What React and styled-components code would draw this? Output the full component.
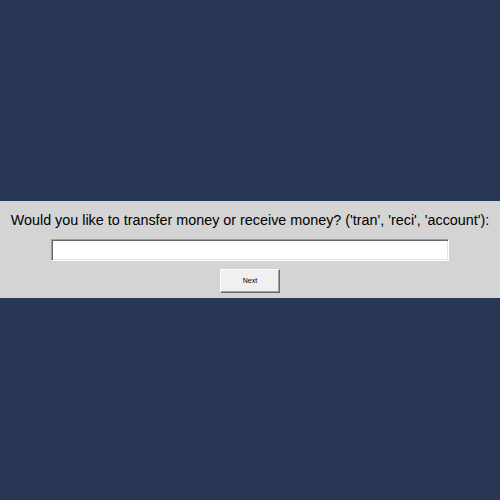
import React from "react";
import styled, { createGlobalStyle } from "styled-components";

const Global = createGlobalStyle`
  html, body { margin: 0; padding: 0; }
  body { background: #283756; font-family: "Liberation Sans", Arial, sans-serif; }
`;

const Screen = styled.div`
  width: 500px;
  height: 500px;
  display: flex;
  flex-direction: column;
  justify-content: center;
  background: #283756;
`;

const Panel = styled.div`
  background: #d4d4d4;
  display: flex;
  flex-direction: column;
  align-items: center;
  padding: 9px 0 5px;
  margin-bottom: 2px;
`;

const Prompt = styled.div`
  font-size: 14.35px;
  color: #000;
  line-height: 20px;
  white-space: nowrap;
`;

const Input = styled.input`
  box-sizing: border-box;
  width: 398px;
  height: 22px;
  margin-top: 9px;
  background: #fff;
  border-style: solid;
  border-width: 1px;
  border-color: #a0a0a0 #ffffff #ffffff #a0a0a0;
  box-shadow: inset 1px 1px 0 #696969, inset -1px -1px 0 #e3e3e3;
  outline: none;
  padding: 0 3px;
  font: 13px "Liberation Sans", Arial, sans-serif;
`;

const Button = styled.button`
  box-sizing: border-box;
  width: 60px;
  height: 24px;
  margin-top: 8px;
  background: #f0f0f0;
  border-style: solid;
  border-width: 1px;
  border-color: #ffffff #696969 #696969 #ffffff;
  box-shadow: inset -1px -1px 0 #a0a0a0;
  font: 7px "Liberation Sans", Arial, sans-serif;
  color: #000;
  padding: 0;
`;

export default function App() {
  return (
    <>
      <Global />
      <Screen>
        <Panel>
          <Prompt>Would you like to transfer money or receive money? ('tran', 'reci', 'account'):</Prompt>
          <Input type="text" />
          <Button>Next</Button>
        </Panel>
      </Screen>
    </>
  );
}
